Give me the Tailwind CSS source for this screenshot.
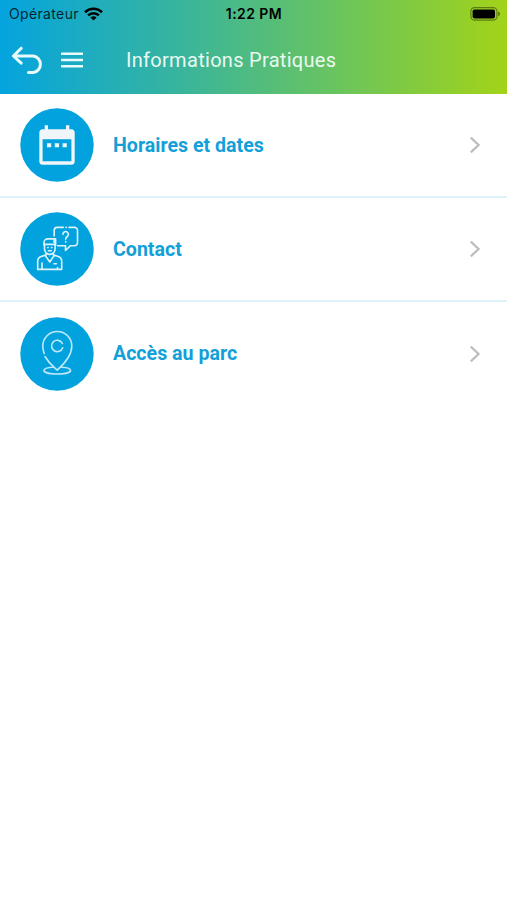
<!DOCTYPE html>
<html lang="fr">
<head>
    <meta charset="UTF-8">
    <meta name="viewport" content="width=device-width, initial-scale=1.0">
    <title>Informations Pratiques</title>
    <script src="https://cdn.jsdelivr.net/npm/@tailwindcss/browser@4"></script>
</head>
<body class="min-h-screen bg-white font-['Roboto',sans-serif]">
    <!-- Header -->
    <header class="h-[94px] bg-[linear-gradient(90deg,#04a4df_0%,#35b3a2_33%,#69c45f_66%,#a2d318_100%)]">
        <!-- Status bar -->
        <div class="grid grid-cols-3 items-center h-[27px] pl-[9px] pr-[6px] font-['Inter',sans-serif] text-black">
            <div class="flex items-center gap-[6px] text-[14px] text-black/80">
                <span class="w-[69px] whitespace-nowrap tracking-[0.35px]">Opérateur</span>
                <svg class="w-[19px] h-[14px]" viewBox="0 0 19 14" fill="none" stroke="#000" stroke-width="2.6">
                    <path d="M1 5.2a12.2 12.2 0 0 1 17 0M4.1 8.4a7.8 7.8 0 0 1 10.8 0"/>
                    <path d="M9.5 13.6 6.4 10.6a4.5 4.5 0 0 1 6.2 0z" fill="#000" stroke="none"/>
                </svg>
            </div>
            <span class="pr-[2px] text-center text-[14px] font-semibold tracking-[0.45px]">1:22 PM</span>
            <svg class="w-[31px] h-[14px] justify-self-end" viewBox="0 0 31 14">
                <rect x="0.9" y="0.6" width="26" height="12.6" rx="3.6" fill="none" stroke="#000" stroke-opacity=".4" stroke-width="1.2"/>
                <rect x="2.6" y="2.4" width="22.4" height="9" rx="1.8"/>
                <path d="M28.2 4.6c2.4 1 2.4 3.6 0 4.6z" fill-opacity=".45"/>
            </svg>
        </div>
        <!-- Navigation -->
        <nav class="flex items-center h-[66px] pl-[11px]">
            <button aria-label="Retour">
                <svg class="w-[33px] h-[30px]" viewBox="0 0 33 30" fill="none" stroke="#e9fafa" stroke-width="3" stroke-linecap="round" stroke-linejoin="round">
                    <path d="M10.2 3.2 2.4 11l7.8 7.2M2.8 11h19.5a8.4 8.4 0 0 1 0 16.6h-4.8"/>
                </svg>
            </button>
            <button class="ml-4" aria-label="Menu">
                <svg class="w-6 h-4" viewBox="0 0 24 16" fill="#e9fafa">
                    <path d="M1 .5h22v2.5H1zM1 6.8h22v2.5H1zM1 13h22v2.5H1z"/>
                </svg>
            </button>
            <h1 class="ml-[42px] text-[20px] tracking-[0.3px] text-[#eaf9f0] whitespace-nowrap">Informations Pratiques</h1>
        </nav>
    </header>

    <!-- Menu list -->
    <main class="text-[19.6px] font-bold text-[#139fd8]">
        <a href="#" class="flex items-center h-[104px] pl-5 pr-[26px] border-b-2 border-[#def2fa]">
            <svg class="w-[74px] h-[74px]" viewBox="0 0 74 74">
                <circle cx="37" cy="37" r="36.7" fill="#02a2df"/>
                <path d="M24.7 17.3H28v4h18v-4h3.3v4h1.9a3.5 3.5 0 0 1 3.5 3.5v28.4a3.5 3.5 0 0 1-3.5 3.5H22.8a3.5 3.5 0 0 1-3.5-3.5V24.8a3.5 3.5 0 0 1 3.5-3.5h1.9zM22.6 31.3v22h28.8v-22z" fill="#eff5f8" fill-rule="evenodd"/>
                <path d="M27 35.2h4.2v4H27zM34.8 35.2H39v4h-4.2zM42.6 35.2h4.2v4h-4.2z" fill="#eff5f8"/>
            </svg>
            <span class="ml-[19px] pt-px">Horaires et dates</span>
            <svg class="ml-auto w-3 h-[18px]" viewBox="0 0 12 18" fill="none" stroke="#bdbdbd" stroke-width="2.2">
                <path d="M1.8 1.6 9.6 9l-7.8 7.4"/>
            </svg>
        </a>
        <a href="#" class="flex items-center h-[104px] pl-5 pr-[26px] border-b-2 border-[#def2fa]">
            <svg class="w-[74px] h-[74px]" viewBox="0 0 74 74" fill="none" stroke="#def4fc" stroke-width="1.6" stroke-linecap="round" stroke-linejoin="round">
                <circle cx="37" cy="37" r="36.7" fill="#02a2df" stroke="none"/>
                <!-- speech bubble -->
                <path d="M34.2 24v-5.6a3 3 0 0 1 3-3h6M46 15.4h.3M49 15.4h5.5a3 3 0 0 1 3 3v12.3a3 3 0 0 1-3 3h-4l-5 4.8v-4.8h-7.8M34.2 26.8v3.6"/>
                <path d="M43 22.4a2.7 2.7 0 1 1 4.2 2.1c-1.2.8-1.5 1.3-1.5 2.7M45.7 29.6v.3"/>
                <!-- agent -->
                <path d="M24 33.5v-3a3.6 3.6 0 0 1 3.6-3.6h8v6.6M24 32.4h11.4M24.5 33.5v3.6a5.3 5.3 0 0 0 10.6 0v-3.6M27.8 35.6h.3M31.6 35.6h.3M28.4 38.8h2.8"/>
                <path d="M26.2 41.8v1l-5 1.7a5 5 0 0 0-3.5 4.7v8.2h24v-8.2a5 5 0 0 0-3.5-4.7l-5-1.7v-1M25.2 43.4l4.6 6.6 4.5-6.6M22 51v6M37.5 55.5v1.8M34 51.7h2.3"/>
            </svg>
            <span class="ml-[19px] pt-px">Contact</span>
            <svg class="ml-auto w-3 h-[18px]" viewBox="0 0 12 18" fill="none" stroke="#bdbdbd" stroke-width="2.2">
                <path d="M1.8 1.6 9.6 9l-7.8 7.4"/>
            </svg>
        </a>
        <a href="#" class="flex items-center h-[103px] pl-5 pr-[26px]">
            <svg class="w-[74px] h-[74px]" viewBox="0 0 74 74" fill="none" stroke="#bfeafa" stroke-width="1.6" stroke-linecap="round" stroke-linejoin="round">
                <circle cx="37" cy="37" r="36.7" fill="#02a2df" stroke="none"/>
                <path d="M25 39.5C29 46.5 33 49.5 37.2 53.2 43 48 51.8 38.5 51.8 29a14.5 14.5 0 0 0-29 0c0 2.6.5 5 1.4 7.4"/>
                <path d="M42.4 26.5a5.7 5.7 0 1 0 .3 4.2"/>
                <path d="M32.8 50.2c-5 .3-8.8 1.6-8.8 3.3 0 2 6 3.5 13.3 3.5s13.3-1.5 13.3-3.5c0-1.7-3.8-3-8.8-3.3"/>
            </svg>
            <span class="ml-[19px]">Accès au parc</span>
            <svg class="ml-auto w-3 h-[18px]" viewBox="0 0 12 18" fill="none" stroke="#bdbdbd" stroke-width="2.2">
                <path d="M1.8 1.6 9.6 9l-7.8 7.4"/>
            </svg>
        </a>
    </main>
</body>
</html>
